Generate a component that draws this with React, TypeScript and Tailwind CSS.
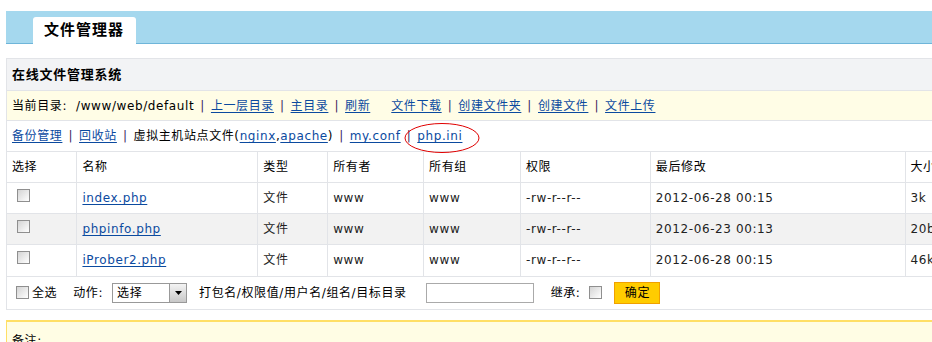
import React from "react";

const FONT = "font-['DejaVu_Sans','Noto_Sans_CJK_SC',sans-serif]";
const LINK = "text-[#0b4a9f] underline underline-offset-2";

function Sep() {
  return <span className="px-[6px] text-[#3b1f5f]">|</span>;
}

function Box({ className = "" }: { className?: string }) {
  return (
    <span
      className={
        "inline-block h-[13px] w-[13px] border border-[#8f8f8f] bg-gradient-to-br from-[#d4d4d4] to-white " +
        className
      }
    />
  );
}

const COLS = ["选择", "名称", "类型", "所有者", "所有组", "权限", "最后修改", "大小"];
const WIDTHS = ["w-[70px]", "w-[181px]", "w-[70px]", "w-[96px]", "w-[97px]", "w-[130px]", "w-[255px]", "w-[60px]"];

const FILES = [
  { name: "index.php", time: "2012-06-28 00:15", size: "3k" },
  { name: "phpinfo.php", time: "2012-06-23 00:13", size: "20b" },
  { name: "iProber2.php", time: "2012-06-28 00:15", size: "46k" },
];

export default function App() {
  return (
    <div className={`relative h-[342px] w-[932px] overflow-hidden bg-white text-[12px] tracking-[0.6px] text-black ${FONT}`}>
      {/* top bar with tab */}
      <div className="pl-[6px] pt-[11px]">
        <div className="flex h-[33px] w-[960px] items-end border-b border-[#6eb5d9] bg-[#a5d8ee]">
          <div className="-mb-px ml-[27px] flex h-[27px] w-[103px] items-center rounded-t-[3px] bg-white pl-[11px] text-[15px] font-bold tracking-[1px]">
            文件管理器
          </div>
        </div>
      </div>

      {/* main box */}
      <div className="ml-[6px] mt-[14px] w-[960px] border border-[#e2e4e8]">
        <div className="flex h-[31px] items-center bg-[#f2f3f5] pl-[5px] text-[13px] font-bold tracking-[0.75px]">
          在线文件管理系统
        </div>
        <div className="flex h-[30px] items-center border-t border-[#e2e4e8] bg-[#fffde6] pl-[5px]">
          <span>当前目录:</span>
          <span className="ml-[9px]">/www/web/default</span>
          <Sep />
          <a className={LINK}>上一层目录</a>
          <Sep />
          <a className={LINK}>主目录</a>
          <Sep />
          <a className={LINK}>刷新</a>
          <span className="w-[21px]" />
          <a className={LINK}>文件下载</a>
          <Sep />
          <a className={LINK}>创建文件夹</a>
          <Sep />
          <a className={LINK}>创建文件</a>
          <Sep />
          <a className={LINK}>文件上传</a>
        </div>
        <div className="flex h-[31px] items-center border-t border-[#e2e4e8] pl-[5px]">
          <a className={LINK}>备份管理</a>
          <Sep />
          <a className={LINK}>回收站</a>
          <Sep />
          <span>虚拟主机站点文件(</span>
          <a className={LINK}>nginx</a>
          <span>,</span>
          <a className={LINK}>apache</a>
          <span>)</span>
          <Sep />
          <a className={LINK}>my.conf</a>
          <Sep />
          <a className={LINK}>php.ini</a>
        </div>

        <table className="table-fixed border-collapse">
          <thead>
            <tr className="h-[31px]">
              {COLS.map((c, i) => (
                <th
                  key={c}
                  className={`${WIDTHS[i]} border-t border-[#e2e4e8] px-[5px] text-left font-normal ${i > 0 ? "border-l" : ""}`}
                >
                  {c}
                </th>
              ))}
            </tr>
          </thead>
          <tbody className="text-[#222]">
            {FILES.map((f, r) => (
              <tr key={f.name} className={`h-[31px] ${r === 1 ? "bg-[#f2f2f2]" : ""}`}>
                <td className="border-t border-[#e2e4e8] pl-[10px] align-middle">
                  <Box className="mb-[6px] align-middle" />
                </td>
                <td className="border-l border-t border-[#e2e4e8] px-[5px]">
                  <a className={LINK}>{f.name}</a>
                </td>
                <td className="border-l border-t border-[#e2e4e8] px-[5px]">文件</td>
                <td className="border-l border-t border-[#e2e4e8] px-[5px]">www</td>
                <td className="border-l border-t border-[#e2e4e8] px-[5px]">www</td>
                <td className="border-l border-t border-[#e2e4e8] px-[5px]">-rw-r--r--</td>
                <td className="border-l border-t border-[#e2e4e8] px-[5px]">{f.time}</td>
                <td className="border-l border-t border-[#e2e4e8] px-[5px]">{f.size}</td>
              </tr>
            ))}
          </tbody>
        </table>

        {/* actions */}
        <div className="flex h-[33px] items-center border-t border-[#e2e4e8] pl-[9px]">
          <Box />
          <span className="ml-[3px]">全选</span>
          <span className="ml-[16px]">动作:</span>
          <div className="ml-[9px] flex h-[20px] w-[75px] items-center justify-between border border-[#999] bg-white pl-[4px]">
            <span>选择</span>
            <span className="flex h-[18px] w-[17px] items-center justify-center border-l border-[#999] bg-gradient-to-b from-[#f4f4f4] to-[#c8c8c8]">
              <svg width="7" height="4" viewBox="0 0 7 4">
                <path d="M0 0h7L3.5 4z" fill="#000" />
              </svg>
            </span>
          </div>
          <span className="ml-[12px]">打包名/权限值/用户名/组名/目标目录</span>
          <input className="ml-[19px] h-[20px] w-[108px] border border-[#aaa] bg-white outline-none" />
          <span className="ml-[17px]">继承:</span>
          <Box className="ml-[9px]" />
          <button className="ml-[12px] h-[22px] w-[46px] border border-[#f0a000] bg-[#ffcc00] text-[12px] text-black">
            确定
          </button>
        </div>
      </div>

      {/* notes box */}
      <div className="ml-[6px] mt-[10px] h-[40px] w-[960px] border-l border-t-2 border-[#ffdf66] bg-[#fffde4] pl-[5px] pt-[10px]">
        备注:
      </div>

      {/* red annotation ellipse */}
      <svg className="absolute left-[404px] top-[122px]" width="76" height="32" viewBox="0 0 76 32">
        <ellipse cx="38" cy="16" rx="37" ry="14.5" fill="none" stroke="#e00000" strokeWidth="1" />
      </svg>
    </div>
  );
}
